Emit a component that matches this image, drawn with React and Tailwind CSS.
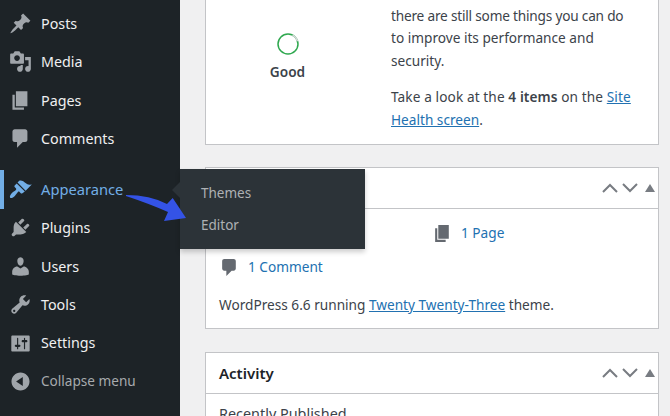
const ic = {
  post: "M10.44 3.02l1.82-1.82 6.36 6.35-1.83 1.82c-1.05-.68-2.48-.57-3.41.36l-.75.75c-.92.93-1.04 2.35-.35 3.41l-1.83 1.82-2.41-2.41-2.8 2.79c-.42.42-3.38 2.71-3.8 2.29s1.86-3.39 2.28-3.81l2.79-2.79L4.1 9.36l1.83-1.82c1.05.69 2.48.57 3.41-.36l.75-.75c.93-.92 1.05-2.35.35-3.41z",
  media: "M13 11V4c0-.55-.45-1-1-1h-1.67L9 1H5L3.67 3H2c-.55 0-1 .45-1 1v7c0 .55.45 1 1 1h10c.55 0 1-.45 1-1zM7 4.5c1.38 0 2.5 1.12 2.5 2.5S8.38 9.5 7 9.5 4.5 8.38 4.5 7 5.62 4.5 7 4.5zM14 6h5v10.5c0 1.38-1.12 2.5-2.5 2.5S14 17.88 14 16.5s1.12-2.5 2.5-2.5c.17 0 .34.02.5.05V9h-3V6zm-4 8.05V13h2v3.5c0 1.38-1.12 2.5-2.5 2.5S7 17.88 7 16.5 8.12 14 9.5 14c.17 0 .34.02.5.05z",
  page: "M6 15V2h10v13H6zm-1 1h8v2H3V5h2v11z",
  comment: "M5 2h9c1.1 0 2 .9 2 2v7c0 1.1-.9 2-2 2h-2l-5 5v-5H5c-1.1 0-2-.9-2-2V4c0-1.1.9-2 2-2z",
  appearance: "M14.48 11.06L7.41 3.99l1.5-1.5c.5-.56 2.3-.47 3.51.32 1.21.8 1.43 1.28 2.91 2.1 1.18.64 2.45 1.26 4.45.85zm-.71.71L6.7 4.7 4.93 6.47c-.39.39-.39 1.02 0 1.41l1.06 1.06c.39.39.39 1.03 0 1.42-.6.6-1.43 1.11-2.21 1.69-.35.26-.7.53-1.01.84-1.43 1.43-2.56 3.4-1.75 4.21.81.81 2.78-.32 4.21-1.75.31-.31.58-.66.84-1.01.58-.78 1.09-1.61 1.69-2.21.39-.39 1.03-.39 1.42 0l1.06 1.06c.39.39 1.02.39 1.41 0z",
  plugins: "M13.11 4.36L9.87 7.6 8 5.73l3.24-3.24c.35-.34 1.05-.2 1.56.32.52.51.66 1.21.31 1.55zm-8 1.77l.91-1.12 9.01 9.01-1.19.84c-.71.71-2.63 1.16-3.82 1.16H6.14L4.9 17.26c-.59.59-1.54.59-2.12 0-.59-.58-.59-1.53 0-2.12l1.24-1.24v-3.88c0-1.13.4-3.19 1.09-3.89zm7.26 3.97l3.24-3.24c.34-.35 1.04-.21 1.55.31.52.51.66 1.21.31 1.55l-3.24 3.25z",
  users: "M10 9.25c-2.27 0-2.73-3.44-2.73-3.44C7 4.02 7.82 2 9.97 2c2.16 0 2.98 2.02 2.71 3.81 0 0-.41 3.44-2.68 3.44zm0 2.57L12.72 10c2.39 0 4.52 2.33 4.52 4.53v2.49s-3.65 1.13-7.24 1.13c-3.65 0-7.24-1.13-7.24-1.13v-2.49c0-2.25 1.94-4.48 4.47-4.48z",
  tools: "M16.68 9.77c-1.34 1.34-3.3 1.67-4.95.99l-5.41 6.52c-.99.99-2.59.99-3.58 0s-.99-2.59 0-3.57l6.52-5.42c-.68-1.65-.35-3.61.99-4.95 1.28-1.28 3.12-1.62 4.72-1.06l-2.89 2.89 2.82 2.82 2.86-2.87c.53 1.58.18 3.39-1.08 4.65zM3.81 16.21c.4.39 1.04.39 1.43 0 .4-.4.4-1.04 0-1.43-.39-.4-1.03-.4-1.43 0-.39.39-.39 1.03 0 1.43z",
  settings: "M18 16V4c0-.55-.45-1-1-1H3c-.55 0-1 .45-1 1v12c0 .55.45 1 1 1h14c.55 0 1-.45 1-1zM8 11h1c.55 0 1 .45 1 1s-.45 1-1 1H8v1.5c0 .28-.22.5-.5.5s-.5-.22-.5-.5V13H6c-.55 0-1-.45-1-1s.45-1 1-1h1V5.5c0-.28.22-.5.5-.5s.5.22.5.5V11zm5-2h-1c-.55 0-1-.45-1-1s.45-1 1-1h1V5.5c0-.28.22-.5.5-.5s.5.22.5.5V7h1c.55 0 1 .45 1 1s-.45 1-1 1h-1v5.5c0 .28-.22.5-.5.5s-.5-.22-.5-.5V9z",
  collapse: "M10 2.16c4.33 0 7.84 3.51 7.84 7.84s-3.51 7.84-7.84 7.84S2.16 14.33 2.16 10 5.71 2.16 10 2.16zm2 11.72V6.12L6.18 9.97z",
};

function Icon({ d, className }) {
  return (
    <svg viewBox="0 0 20 20" className={className} fill="currentColor" aria-hidden="true">
      <path d={d} />
    </svg>
  );
}

function Row({ icon, label, active, muted, gap }) {
  return (
    <div
      className={
        "flex h-[38.4px] items-center gap-[9px] border-l-4 pl-[5px] " +
        (active ? "border-[#72aee6] text-[14.7px] text-[#72aee6] " : "border-transparent ") +
        (muted ? "text-[13.6px] text-[#a7aaad] " : active ? "" : "text-[14.3px] text-[#f0f0f1] ") +
        (gap ? "mt-[12.4px]" : "")
      }
    >
      <Icon d={ic[icon]} className={"h-[23px] w-[23px] shrink-0 " + (active ? "text-[#72aee6]" : "text-[#a0a5aa]")} />
      <span>{label}</span>
    </div>
  );
}

function Handles() {
  return (
    <div className="flex items-center text-[#787c82]">
      <svg viewBox="0 0 16 10" className="h-[10px] w-[16px]" fill="none" stroke="currentColor" strokeWidth="2">
        <path d="M1 9l7-7 7 7" />
      </svg>
      <svg viewBox="0 0 16 10" className="ml-[4px] h-[10px] w-[16px]" fill="none" stroke="currentColor" strokeWidth="2">
        <path d="M1 1l7 7 7-7" />
      </svg>
      <svg viewBox="0 0 10 8" className="ml-[7px] mr-[3px] h-[8px] w-[10px]" fill="currentColor">
        <path d="M5 0l5 8H0z" />
      </svg>
    </div>
  );
}

export default function App() {
  return (
    <div className="relative flex h-[416px] w-[670px] overflow-hidden bg-[#f0f0f1] font-['Noto_Sans',sans-serif] text-[13.65px] text-[#3c434a]">
      <nav className="w-[180px] shrink-0 bg-[#1d2327] pt-[4.3px]">
        <Row icon="post" label="Posts" />
        <Row icon="media" label="Media" />
        <Row icon="page" label="Pages" />
        <Row icon="comment" label="Comments" />
        <Row icon="appearance" label="Appearance" active gap />
        <Row icon="plugins" label="Plugins" />
        <Row icon="users" label="Users" />
        <Row icon="tools" label="Tools" />
        <Row icon="settings" label="Settings" />
        <Row icon="collapse" label="Collapse menu" muted />
      </nav>

      <main className="flex-1 pl-[25px] pr-[11px]">
        <section className="mt-[-30px] flex h-[175px] border border-[#c3c4c7] bg-white">
          <div className="flex w-[163px] flex-col items-center pt-[62px]">
            <svg viewBox="0 0 22 22" className="h-[22px] w-[22px]" fill="none" strokeWidth="1.5">
              <circle cx="11" cy="11" r="10" stroke="#2fa84f" />
              <path d="M15.5 2.1A10 10 0 0 1 20.6 8.3" stroke="#d5d7d9" />
            </svg>
            <div className="mt-[7px] font-semibold">Good</div>
          </div>
          <div className="whitespace-nowrap pl-[22px] pt-[34px] leading-[22.4px]">
            <p>
              <span className="tracking-[-0.2px]">there are still some things you can do</span>
              <br />
              to improve its performance and
              <br />
              security.
            </p>
            <p className="mt-[14px]">
              <span className="tracking-[0.1px]">
                Take a look at the <b className="font-semibold">4 items</b> on the{" "}
                <a className="text-[#2271b1] underline">Site</a>
              </span>
              <br />
              <a className="text-[#2271b1] underline">Health screen</a>.
            </p>
          </div>
        </section>

        <section className="mt-[22px] h-[162px] border border-[#c3c4c7] bg-white">
          <header className="flex h-[41px] items-center justify-end border-b border-[#c3c4c7]">
            <Handles />
          </header>
          <div className="px-[13px]">
            <div className="flex h-[48px] items-center pl-[213px] pt-[1px]">
              <Icon d={ic.page} className="h-[21px] w-[21px] text-[#646970]" />
              <a className="ml-[8px] text-[#2271b1]">1 Page</a>
            </div>
            <div className="flex h-[21px] items-center">
              <Icon d={ic.comment} className="h-[21px] w-[21px] text-[#646970]" />
              <a className="ml-[8px] text-[#2271b1]">1 Comment</a>
            </div>
            <p className="mt-[17px]">
              WordPress 6.6 running <a className="text-[#2271b1] underline">Twenty Twenty-Three</a> theme.
            </p>
          </div>
        </section>

        <section className="mt-[23px] border border-[#c3c4c7] bg-white">
          <header className="flex h-[41px] items-center justify-between border-b border-[#c3c4c7] pl-[13px]">
            <h2 className="text-[15px] font-semibold text-[#1d2327]">Activity</h2>
            <Handles />
          </header>
          <div className="px-[13px] pt-[9px] text-[14.4px]">Recently Published</div>
        </section>
      </main>

      <div className="absolute left-[180px] top-[169px] h-[80px] w-[185px] bg-[#2c3338] pb-[8px] pl-[21px] pt-[8px] text-[13.5px] text-[#aeb1b4] shadow-[0_3px_5px_rgba(0,0,0,0.2)]">
        <div className="absolute left-[-8px] top-[13px] h-0 w-0 border-y-[8px] border-r-[8px] border-y-transparent border-r-[#2c3338]" />
        <div className="flex h-[32px] items-center">Themes</div>
        <div className="flex h-[32px] items-center">Editor</div>
      </div>

      <svg className="absolute left-[120px] top-[190px] h-[40px] w-[75px]" viewBox="120 190 75 40" fill="#3453e6">
        <path d="M126 195Q150 195 167 204L172.7 198 186 218 164 221 168 212Q150 204 126 196Z" />
      </svg>
    </div>
  );
}
